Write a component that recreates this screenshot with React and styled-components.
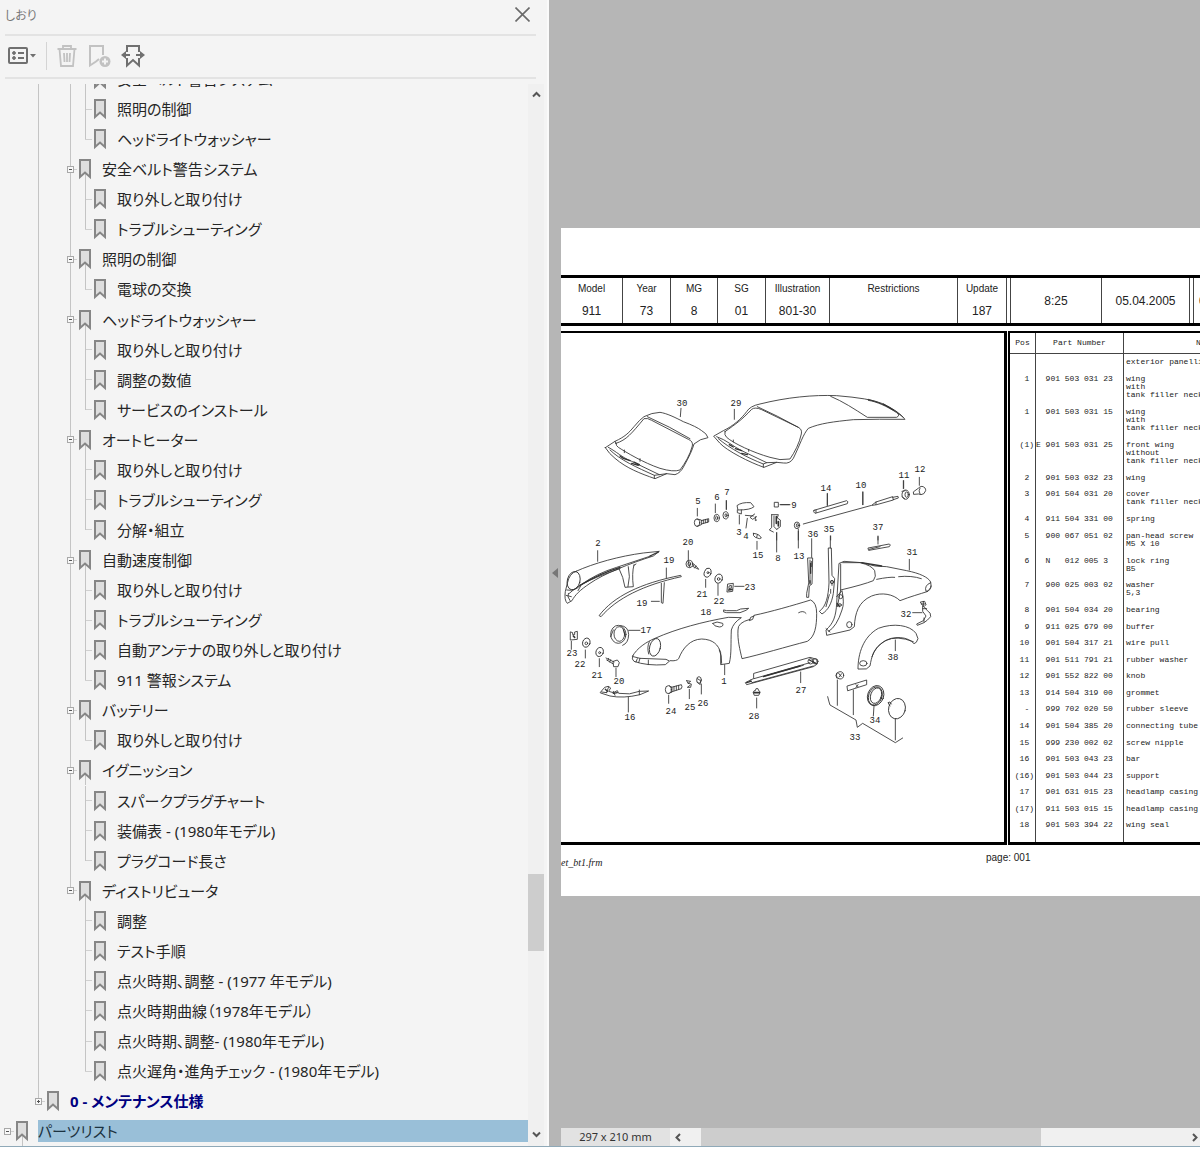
import styled, { createGlobalStyle, css } from "styled-components";

const GlobalStyle = createGlobalStyle`
  *, *::before, *::after { box-sizing: border-box; }
  body {
    margin: 0;
    background: #fff;
    font-family: "Noto Sans", "Noto Sans CJK JP", sans-serif;
    color: #222;
  }
  button {
    border: 0;
    padding: 0;
    margin: 0;
    background: none;
    font: inherit;
    color: inherit;
    cursor: pointer;
  }
`;

/* ---------- shell ---------- */

const Shell = styled.div`
  height: calc(100vh - 13px);
  display: grid;
  grid-template-columns: 549px minmax(0, 1fr);
  border-bottom: 1px solid #8fa9b8;
  overflow: hidden;
`;

const Sidebar = styled.aside`
  display: flex;
  flex-direction: column;
  min-height: 0;
  background: #f4f4f4;
  border-right: 2px solid #fafafa;
`;

const PanelHeader = styled.header`
  display: flex;
  align-items: center;
  justify-content: space-between;
  height: 36px;
  margin: 0 11px 0 5px;
  padding-bottom: 5px;
  border-bottom: 2px solid #e3e3e3;
`;

const PanelTitle = styled.h1`
  margin: 0;
  font-size: 12px;
  font-weight: 400;
  font-feature-settings: "palt";
  color: #777;
`;

const CloseButton = styled.button`
  width: 28px;
  height: 24px;
  svg { display: block; margin: auto; }
`;

const Toolbar = styled.div`
  display: flex;
  align-items: center;
  gap: 9px;
  height: 43px;
  margin: 0 11px 0 5px;
  padding-bottom: 2px;
  border-bottom: 2px solid #e3e3e3;
`;

const ToolButton = styled.button`
  height: 26px;
  color: ${(p) => (p.disabled ? "#c2c2c2" : "#707070")};
  svg { display: block; }
`;

const Separator = styled.span`
  width: 1px;
  height: 28px;
  background: #d4d4d4;
`;

const TreeArea = styled.div`
  flex: 1;
  min-height: 0;
  display: flex;
  margin-top: 5px;
  padding-right: 3px;
`;

/* ---------- bookmark tree ---------- */

const TreeView = styled.nav`
  flex: 1;
  min-width: 0;
  overflow: hidden;
`;

const TreeList = styled.ul`
  display: flex;
  flex-direction: column;
  height: calc(100% + 20px);
  margin: -20px 0 0;
  padding: 0;
  list-style: none;
`;

const TreeRow = styled.li`
  flex: 1 0 30px;
  display: flex;
  align-items: center;
  padding-left: ${(p) => (p.$level > 0 ? 31 : 0)}px;
`;

const Guide = styled.span`
  align-self: stretch;
  display: flex;
  align-items: center;
  justify-content: center;
  flex: 0 0 14px;
  margin-right: ${(p) => (p.$wide ? 18 : 1)}px;
  background-repeat: no-repeat;
  background-image: ${(p) => (p.$line ? "linear-gradient(#c4c4c4, #c4c4c4)" : "none")},
    ${(p) => (p.$tick ? "linear-gradient(#d0d0d0, #d0d0d0)" : "none")};
  background-position: 7px 0, 7px 50%;
  background-size: 1px ${(p) => (p.$line === "half" ? "50%" : "100%")}, 9px 1px;
`;

const Toggle = styled.button`
  position: relative;
  width: 7px;
  height: 7px;
  border: 1px solid #a8a8a8;
  background: #f8f8f8;
  &::before {
    content: "";
    position: absolute;
    inset: 2px 1px;
    background: #555;
  }
  ${(p) =>
    !p.$open &&
    css`
      &::after {
        content: "";
        position: absolute;
        inset: 1px 2px;
        background: #555;
      }
    `}
`;

const MarkIcon = styled.svg`
  flex: none;
  margin: 0 11px 0 1px;
`;

const TreeLink = styled.a`
  font-size: 15px;
  line-height: 22px;
  font-feature-settings: "palt";
  white-space: nowrap;
  text-decoration: none;
  color: #262626;
  ${(p) =>
    p.$bold &&
    css`
      font-weight: 700;
      color: #000080;
    `}
  ${(p) =>
    p.$selected &&
    css`
      flex: 1;
      margin-left: -1px;
      background: #99bfd8;
      color: #1c3240;
    `}
`;

const bookmarks = [
  [3, "安全ベルト警告システム"],
  [3, "照明の制御"],
  [3, "ヘッドライトウォッシャー"],
  [2, "安全ベルト警告システム"],
  [3, "取り外しと取り付け"],
  [3, "トラブルシューティング"],
  [2, "照明の制御"],
  [3, "電球の交換"],
  [2, "ヘッドライトウォッシャー"],
  [3, "取り外しと取り付け"],
  [3, "調整の数値"],
  [3, "サービスのインストール"],
  [2, "オートヒーター"],
  [3, "取り外しと取り付け"],
  [3, "トラブルシューティング"],
  [3, "分解・組立"],
  [2, "自動速度制御"],
  [3, "取り外しと取り付け"],
  [3, "トラブルシューティング"],
  [3, "自動アンテナの取り外しと取り付け"],
  [3, "911 警報システム"],
  [2, "バッテリー"],
  [3, "取り外しと取り付け"],
  [2, "イグニッション"],
  [3, "スパークプラグチャート"],
  [3, "装備表 - (1980年モデル)"],
  [3, "プラグコード長さ"],
  [2, "ディストリビュータ"],
  [3, "調整"],
  [3, "テスト手順"],
  [3, "点火時期、調整 - (1977 年モデル)"],
  [3, "点火時期曲線（1978年モデル）"],
  [3, "点火時期、調整- (1980年モデル)"],
  [3, "点火遅角・進角チェック - (1980年モデル)"],
  [1, "0 - メンテナンス仕様"],
  [0, "パーツリスト"],
];

// true when a later row still hangs on the guide line of this level
function continues(index, level) {
  for (let i = index + 1; i < bookmarks.length; i++) {
    if (bookmarks[i][0] === level) return true;
    if (bookmarks[i][0] < level) return false;
  }
  return false;
}

function Bookmark({ index }) {
  const [level, text] = bookmarks[index];
  const line = (l) => (continues(index, l) ? "full" : l === level && l > 0 ? "half" : null);
  const hasChildren = level < 3;
  const open = level !== 1;
  const toggle = <Toggle type="button" $open={open} aria-label={open ? "閉じる" : "開く"} />;

  return (
    <TreeRow $level={level}>
      {level === 0 && <Guide $tick>{toggle}</Guide>}
      {level >= 1 && (
        <Guide $line={line(1)} $tick={level === 1} $wide={level > 1}>
          {level === 1 && toggle}
        </Guide>
      )}
      {level >= 2 && (
        <Guide $line={line(2)} $tick={level === 2}>
          {level === 2 && toggle}
        </Guide>
      )}
      {level === 3 && <Guide $line={line(3)} $tick />}
      <MarkIcon width="12" height="30" viewBox="0 0 12 30">
        {hasChildren && open && <path d="M6.5 20V30" stroke="#c4c4c4" />}
        <path d="M1 6H11V23L6 18.5L1 23Z" fill="#dedede" stroke="#868686" strokeWidth="2" />
      </MarkIcon>
      <TreeLink href="#" $bold={level === 1} $selected={level === 0}>
        {text}
      </TreeLink>
    </TreeRow>
  );
}

/* ---------- scrollbars ---------- */

const Scrollbar = styled.div`
  display: flex;
  flex-direction: ${(p) => (p.$horizontal ? "row" : "column")};
  flex: ${(p) => (p.$horizontal ? "1" : "0 0 16px")};
  background: #f0f0f0;
`;

const ScrollButton = styled.button`
  flex: 0 0 ${(p) => p.$size}px;
  display: flex;
  align-items: center;
  justify-content: center;
`;

const Track = styled.span`
  flex: ${(p) => p.$part} 0 0;
`;

const Thumb = styled.span`
  flex: ${(p) => p.$part} 0 0;
  background: #cdcdcd;
`;

function Chevron({ d }) {
  return (
    <svg width="9" height="9" viewBox="0 0 9 9" fill="none" stroke="#555" strokeWidth="2">
      <path d={d} />
    </svg>
  );
}

/* ---------- document view ---------- */

const Viewer = styled.main`
  display: grid;
  grid-template-columns: 12px minmax(0, 1fr);
  min-height: 0;
  background: #b6b6b6;
`;

const CollapseButton = styled.button`
  display: flex;
  align-items: center;
  justify-content: center;
`;

const Stage = styled.div`
  display: flex;
  flex-direction: column;
  min-height: 0;
`;

const Canvas = styled.div`
  flex: 1;
  min-height: 0;
  overflow: hidden;
  padding-top: 228px;
`;

const Sheet = styled.article`
  width: 945px;
  padding: 47px 0 27px;
  background: #fff;
  font-family: "Liberation Sans", Arial, sans-serif;
  color: #222;
`;

const HeadTable = styled.table`
  width: 100%;
  table-layout: fixed;
  border-collapse: separate;
  border-spacing: 0;
  border-top: 3px solid #000;
  border-bottom: 3px solid #000;
  th, td {
    padding: 0;
    text-align: center;
    border-right: 1px solid #444;
  }
  th {
    height: 21px;
    font-size: 10px;
    font-weight: 400;
  }
  td {
    height: 24px;
    font-size: 12px;
  }
  .last { border: 0; text-align: left; padding-left: 5px; }
`;

const Panels = styled.div`
  display: grid;
  grid-template-columns: 446px 1fr;
  column-gap: 1px;
  margin-top: 5px;
`;

const Frame = styled.section`
  min-width: 0;
  height: 514px;
  overflow: hidden;
  border: solid #000;
  border-width: ${(p) => (p.$left ? "2px 3px 3px 0" : "2px 0 3px 2px")};
  svg { display: block; }
`;

const PartsTable = styled.table`
  width: 100%;
  height: 100%;
  table-layout: fixed;
  border-collapse: separate;
  border-spacing: 0;
  font: 8px/8px "Liberation Mono", monospace;
  white-space: pre;
  color: #222;
  th {
    height: 21px;
    padding: 0;
    font-weight: 400;
    border-bottom: 1px solid #444;
  }
  td {
    padding: 0 0 8px;
    vertical-align: top;
  }
  td:last-child { padding-left: 2px; }
  th + th, td + td { border-left: 1px solid #444; }
  .pos { text-align: right; padding-right: 1px; }
  .name { text-align: left; padding-left: 72px; }
`;

const Spacer = styled.tr`
  height: ${(p) => p.$size}px;
  && td { padding: 0; }
`;

const SheetFooter = styled.footer`
  display: grid;
  grid-template-columns: 425px 1fr;
  padding-top: 7px;
  font-size: 10px;
  line-height: 12px;
`;

const FileName = styled.span`
  padding-top: 5px;
  font-family: "Liberation Serif", "Times New Roman", serif;
  font-style: italic;
`;

const StatusBar = styled.footer`
  display: flex;
  height: 18px;
`;

const PageSize = styled.span`
  flex: 0 0 109px;
  background: #e2e2e2;
  font-size: 11px;
  line-height: 17px;
  text-align: center;
  color: #333;
`;

const parts = [
  ["", "", "exterior panelling"],
  ["  1 ", "  901 503 031 23", "wing\nwith\ntank filler neck"],
  ["  1 ", "  901 503 031 15", "wing\nwith\ntank filler neck"],
  [" (1)", "E 901 503 031 25", "front wing\nwithout\ntank filler neck"],
  ["  2 ", "  901 503 032 23", "wing"],
  ["  3 ", "  901 504 031 20", "cover\ntank filler neck"],
  ["  4 ", "  911 504 331 00", "spring"],
  ["  5 ", "  900 067 051 02", "pan-head screw\nM5 X 10"],
  ["  6 ", "  N   012 005 3 ", "lock ring\nB5"],
  ["  7 ", "  900 025 003 02", "washer\n5,3"],
  ["  8 ", "  901 504 034 20", "bearing"],
  ["  9 ", "  911 025 679 00", "buffer"],
  [" 10 ", "  901 504 317 21", "wire pull"],
  [" 11 ", "  901 511 791 21", "rubber washer"],
  [" 12 ", "  901 552 822 00", "knob"],
  [" 13 ", "  914 504 319 00", "grommet"],
  ["  - ", "  999 702 020 50", "rubber sleeve"],
  [" 14 ", "  901 504 385 20", "connecting tube"],
  [" 15 ", "  999 230 002 02", "screw nipple"],
  [" 16 ", "  901 503 043 23", "bar"],
  ["(16)", "  901 503 044 23", "support"],
  [" 17 ", "  901 631 015 23", "headlamp casing"],
  ["(17)", "  911 503 015 15", "headlamp casing"],
  [" 18 ", "  901 503 394 22", "wing seal"],
];

/* ---------- exploded drawing ---------- */

const callouts = [
  [30, 682, 403], [29, 736, 403], [5, 698, 501], [6, 717, 497], [7, 727, 492],
  [3, 739, 532], [4, 746, 536], [9, 794, 505], [8, 778, 558], [13, 799, 556],
  [15, 758, 555], [14, 826, 488], [10, 861, 485], [11, 904, 475], [12, 920, 469],
  [36, 813, 534], [35, 829, 529], [37, 878, 527], [31, 912, 552], [2, 598, 543],
  [20, 688, 542], [19, 669, 560], [19, 642, 603], [21, 702, 594], [22, 719, 601],
  [23, 750, 587], [18, 706, 612], [17, 646, 630], [23, 572, 653], [22, 580, 664],
  [21, 597, 675], [20, 619, 681], [16, 630, 717], [1, 724, 681], [24, 671, 711],
  [25, 690, 707], [26, 703, 703], [27, 801, 690], [28, 754, 716], [32, 906, 614],
  [38, 893, 657], [34, 875, 720], [33, 855, 737],
];

const Callout = styled.text`
  font: 9px "Liberation Mono", monospace;
  text-anchor: middle;
  fill: #222;
`;

function Drawing() {
  return (
    <svg width="443" height="510" viewBox="561 333 443 510" role="img" aria-label="801-30">
      <g fill="none" stroke="#333" strokeWidth="2.6" strokeLinejoin="round" strokeLinecap="round">
        {/* roofs, fuel flap and wire pull */}
        <g transform="translate(560 380) scale(.33333)">
          <path d="M136 203L165 184C195 170 205 160 222 140Q240 118 252 110Q275 98 300 97C320 100 345 112 370 125Q410 140 425 152Q440 160 444 173Q420 176 402 192Q396 215 372 258Q362 279 345 284L320 281L285 296C240 280 200 265 165 235Q148 222 136 203Z" />
          <path d="M168 190C200 180 215 160 252 116Q262 113 275 121L385 178Q400 184 397 198C390 225 375 250 360 270Q340 277 300 265C250 248 200 218 175 202Q168 198 168 190Z" />
          <path d="M145 202C170 215 185 232 215 244L298 284L283 286V295M150 210C180 240 230 262 283 286M165 184L168 190M298 284L320 281M262 110Q330 140 390 176M193 218V210M240 244V236" />
          <path d="M180 228L190 235M192 236L210 242M215 250L235 256M222 246L238 254" strokeWidth="4" />
          <path d="M462 168L490 152C520 138 545 115 560 95Q570 78 600 72C680 52 760 44 830 47Q930 55 965 70Q1015 92 1035 118Q960 117 880 119C820 125 780 130 745 145C728 165 722 190 700 235Q690 252 670 249L650 247L612 262C570 248 500 212 480 190Z" />
          <path d="M495 155C530 130 545 120 575 88Q585 80 605 89L715 142Q727 148 724 162C718 190 705 215 690 237Q660 243 630 232C580 218 520 190 500 172Q492 165 495 155Z" />
          <path d="M470 170C500 180 520 200 545 212L620 248L610 252V262M475 176C510 206 560 232 610 252M620 248L650 247M592 80Q650 106 715 142M520 186V180M566 214V208" />
          <path d="M508 194L520 201M526 206L545 212M545 220L562 224" strokeWidth="4" />
          <path d="M812 49C850 65 880 85 922 112H1010Q1022 106 1010 98C980 78 950 65 925 61M925 58Q990 75 1030 112" />
          <path d="M970 72L1000 90" strokeWidth="4" />
          <path d="M363 85L361 110M523 88V118M412 385V408M466 372V398M499 362V388M538 405V432M562 415L558 444M662 374H690M650 458V480M715 454V480M802 340V376M908 336V374M1031 302V325M812 468V480M954 468V480" />
          <path d="M532 376Q545 366 572 368L582 380Q572 390 535 390ZM532 390V398L544 402V390M556 406L580 408M584 402L570 412L578 418L590 410M586 410V422L590 420" />
          <ellipse cx="411" cy="428" rx="8" ry="11" />
          <path d="M411 417L424 420V434L411 439M424 422L446 416V426L424 432M430 420V430M436 418V428M442 418V427" />
          <ellipse cx="470" cy="414" rx="8" ry="11" />
          <ellipse cx="470" cy="414" rx="3" ry="6" />
          <ellipse cx="497" cy="406" rx="8" ry="11" />
          <ellipse cx="498" cy="406" rx="3" ry="5" />
          <path d="M644 367H655V381H644Z" />
          <path d="M635 404H655L652 414L661 420V440L650 448M635 404V442L628 450L640 456M642 408V440L650 448" />
          <path d="M649 410V430M655 425V438" strokeWidth="5" />
          <ellipse cx="711" cy="436" rx="8" ry="10" />
          <ellipse cx="712" cy="436" rx="3" ry="5" />
          <path d="M730 432L840 402L935 376L948 366L998 350L1000 360L950 374L937 376M998 352L1014 349L1015 354L1000 359M948 366V374M762 391L860 362Q866 364 862 371L765 400Q758 396 762 391ZM768 390V398" />
          <path d="M580 460L590 462L598 466L604 474L598 476L586 472Q578 468 580 460M592 464L590 472" />
        </g>

        {/* left wing, bonnet seal, front wing, bumper bar */}
        <g transform="translate(560 530) scale(.33333)">
          <path d="M48 124C100 100 180 78 250 69L298 64L280 78C210 100 130 132 90 160C60 180 45 195 36 212L22 220Q12 210 16 184L22 160Q28 130 48 124Z" />
          <ellipse cx="41" cy="152" rx="19" ry="28" transform="rotate(15 41 152)" />
          <path d="M20 180Q45 185 62 165Q110 130 170 112L272 78M28 190C60 160 110 140 180 116M25 190Q20 200 30 212M18 196L34 200M178 118Q190 140 195 172L220 170Q215 130 222 104M205 110Q212 140 204 170M222 106L228 102M62 168L54 182" />
          <path d="M60 166Q120 130 180 112M270 78L295 66" strokeWidth="4" />
          <path d="M118 256C160 200 240 160 362 136L364 140C250 165 170 205 124 259ZM304 160V218L309 220L313 158" />
          <path d="M113 62V94M319 114V144M274 214H298M385 62V90M437 148V172M474 162V196M524 169H552M206 301H240M34 334V358M76 360V384M118 386V410M168 414V440M205 502V546M326 496V520M388 478V506M424 462V492M494 404V434" />
          <ellipse cx="388" cy="102" rx="10" ry="11" />
          <path d="M384 92L390 112M396 98L412 112L416 118L400 110M402 104L398 110M408 108L404 114" />
          <ellipse cx="388" cy="102" rx="4" ry="6" />
          <ellipse cx="443" cy="128" rx="10" ry="14" transform="rotate(20 443 128)" />
          <circle cx="444" cy="128" r="3" />
          <ellipse cx="476" cy="146" rx="11" ry="14" transform="rotate(20 476 146)" />
          <circle cx="476" cy="147" r="4" />
          <path d="M504 162L520 160L518 184L502 186ZM508 168L514 166V174L508 176Z" />
          <path d="M506 180L516 178" strokeWidth="5" />
          <path d="M492 240L500 242H530L542 237L566 235L558 241L540 248H500L492 246Z" />
          <path d="M32 306L38 308V314H44V306L52 304V328L32 330Z" />
          <path d="M40 318L44 322" strokeWidth="5" />
          <ellipse cx="79" cy="338" rx="11" ry="14" transform="rotate(20 79 338)" />
          <circle cx="79" cy="340" r="4" />
          <ellipse cx="119" cy="366" rx="11" ry="14" transform="rotate(20 119 366)" />
          <circle cx="119" cy="368" r="3" />
          <path d="M138 384L162 396M140 390L160 402M146 385L143 392M152 389L149 396M160 394L172 390L178 398L174 410H162Z" />
          <ellipse cx="175" cy="313" rx="23" ry="27" />
          <ellipse cx="178" cy="312" rx="16" ry="22" />
          <path d="M182 287Q205 288 206 314Q205 340 188 346M160 300L152 320M190 300L196 320" />
          <path d="M218 378C230 355 260 335 285 325C350 296 430 275 505 262L544 263Q520 278 514 300C512 340 515 370 508 400L482 404V368C475 345 460 328 425 327C390 328 368 355 356 386Q350 394 330 392L316 404Q260 408 222 394Q214 388 218 378Z" />
          <ellipse cx="285" cy="352" rx="16" ry="27" transform="rotate(15 285 352)" />
          <path d="M268 335Q260 350 266 372M220 380L240 385L318 388L326 392M232 386L228 396M240 385L236 398M265 390V404M478 360Q486 375 485 400M458 280Q470 272 488 280Q492 290 478 291Q462 290 458 280" />
          <path d="M122 486L134 472Q146 465 152 474L146 484L160 488L172 482L176 490Q210 496 238 484L266 483L240 494Q190 506 150 498L122 489ZM146 470L140 488M238 480V494M160 484L165 496M125 486L140 488" />
          <path d="M136 478L142 484M160 490L172 488" strokeWidth="4" />
          <ellipse cx="325" cy="479" rx="9" ry="12" />
          <path d="M334 472L364 464Q368 470 364 476L334 486M342 470V482M349 468V480M356 466V478M328 468L336 472V486L326 490" />
          <path d="M380 452L392 454L384 460L394 462L392 472H382L390 466M380 452L384 460" />
          <ellipse cx="417" cy="450" rx="7" ry="10" />
          <path d="M412 446L422 452L420 464L412 456" />
        </g>

        {/* door, pillars, rear quarter, sill and tank parts */}
        <g transform="translate(720 460) scale(.33333)">
          <path d="M208 134H180M19 122V148M322 102V136M429 96V134M550 62V86M598 52V76M170 218V276M235 208V264M111 244V268M275 236V292M331 228V264M474 230V252M568 298V330M578 458H606M526 540V572M242 636V668M110 714V744M352 660V736M400 690V764M462 738L460 768M526 776V840" />
          <ellipse cx="557" cy="104" rx="11" ry="14" />
          <ellipse cx="560" cy="104" rx="5" ry="8" />
          <path d="M546 94L556 92M546 110L554 116M581 95L596 84Q600 79 606 79Q618 82 617 92Q613 104 603 104L596 102L582 103Z" />
          <path d="M600 84Q594 92 600 102" />
          <path d="M445 264L508 252Q514 254 508 260L447 271ZM448 268L480 260" />
          <path d="M264 294H278L276 372L268 378L266 412H260V400L266 370ZM270 300V368M274 304V320" />
          <path d="M272 310V340M270 362V372" strokeWidth="4" />
          <path d="M326 264H334L336 346L344 356L340 400C335 430 325 450 306 462L298 454C318 440 325 410 327 370ZM336 362V376M332 388V400M328 404L318 440" />
          <circle cx="336" cy="366" r="5" />
          <path d="M358 310L372 304L425 308L465 318L500 320L560 332C600 340 625 352 632 366Q636 385 624 394C600 402 570 410 540 422C520 402 485 396 455 408C415 425 405 460 403 500L390 510L320 526L318 510C340 490 348 470 350 430ZM362 312L362 390L352 440M368 308H420Q455 316 464 332Q470 350 460 362Q430 374 362 390M470 358Q510 350 524 352M536 350Q575 346 604 356M632 368Q612 376 618 394Q630 392 634 378M350 410L366 392Q374 430 366 450Q350 500 326 514M318 506L330 516" />
          <path d="M425 308L485 318M352 430L358 440" strokeWidth="4" />
          <ellipse cx="388" cy="494" rx="8" ry="9" />
          <circle cx="362" cy="410" r="6" />
          <circle cx="360" cy="435" r="4" />
          <path d="M602 426L614 424L618 434L612 440L622 452Q634 458 632 470Q622 482 612 488L592 496L590 492L610 482L618 468L608 454V438ZM610 424V440M604 432H616M608 446H620M612 474V486" />
          <path d="M414 626C414 580 430 530 475 505C520 488 570 495 588 520L594 536Q590 550 582 551C565 530 520 525 490 546C460 565 455 590 450 618L440 626Z" />
          <path d="M456 590Q466 560 496 542Q530 525 580 545" />
          <ellipse cx="430" cy="610" rx="11" ry="8" />
          <path d="M90 478Q52 488 54 510C52 540 60 570 66 596C120 584 200 560 262 544C285 530 290 500 290 460Q290 428 272 420C220 436 150 456 102 466L98 478L88 482L92 472L102 468M236 458Q250 450 258 460" />
          <path d="M102 640L270 592L290 598L292 612L280 620L80 674L76 668L100 656ZM102 656L270 608M92 660L96 668L280 618M134 648L250 616" />
          <circle cx="272" cy="604" r="8" />
          <circle cx="286" cy="604" r="8" />
          <path d="M268 600L288 610M80 668L92 664M130 650L240 618" strokeWidth="4" />
          <path d="M100 696Q102 690 106 692L108 686H114L116 692Q120 692 120 698L116 706H104Z" />
          <path d="M102 698H118" strokeWidth="5" />
          <ellipse cx="360" cy="646" rx="11" ry="11" />
          <path d="M350 640Q345 646 350 654M356 640L364 650M365 641L357 651" />
          <path d="M382 678L440 660V674L384 692ZM408 674L414 680M414 674L408 682" />
          <ellipse cx="467" cy="707" rx="24" ry="31" transform="rotate(20 467 707)" />
          <ellipse cx="468" cy="707" rx="16" ry="24" transform="rotate(20 468 707)" />
          <ellipse cx="466" cy="708" rx="20" ry="28" transform="rotate(20 466 708)" />
          <ellipse cx="531" cy="746" rx="25" ry="31" transform="rotate(15 531 746)" />
          <path d="M510 738L504 728L510 726L514 732M323 710Q328 730 330 735L408 780L412 802L428 790L526 848L548 834" />
        </g>
      </g>
      {callouts.map(([n, x, y], i) => (
        <Callout key={i} x={x} y={y + 3}>
          {n}
        </Callout>
      ))}
    </svg>
  );
}

function SheetHead() {
  return (
    <HeadTable>
      <colgroup>
        {[62, 48, 47, 48, 64, 128, 49, 4, 91, 88, 4, 312].map((w, i) => (
          <col key={i} style={{ width: w }} />
        ))}
      </colgroup>
      <tbody>
        <tr>
          {["Model", "Year", "MG", "SG", "Illustration", "Restrictions", "Update"].map((t) => (
            <th key={t} scope="col">{t}</th>
          ))}
          <td rowSpan="2" />
          <td rowSpan="2">8:25</td>
          <td rowSpan="2">05.04.2005</td>
          <td rowSpan="2" />
          <td rowSpan="2" className="last">0</td>
        </tr>
        <tr>
          {["911", "73", "8", "01", "801-30", "", "187"].map((t, i) => (
            <td key={i}>{t}</td>
          ))}
        </tr>
      </tbody>
    </HeadTable>
  );
}

function PartsList() {
  return (
    <PartsTable>
      <colgroup>
        <col style={{ width: 25 }} />
        <col style={{ width: 88 }} />
        <col />
      </colgroup>
      <thead>
        <tr>
          <th scope="col">Pos</th>
          <th scope="col">Part Number</th>
          <th scope="col" className="name">Name</th>
        </tr>
      </thead>
      <tbody>
        <Spacer $size={4}><td /><td /><td /></Spacer>
        {parts.map(([pos, number, name], i) => (
          <tr key={i}>
            <td className="pos">{pos}</td>
            <td>{number}</td>
            <td>{name}</td>
          </tr>
        ))}
        <Spacer $size={4}><td /><td /><td /></Spacer>
      </tbody>
    </PartsTable>
  );
}

function App() {
  return (
    <>
      <GlobalStyle />
      <Shell>
        <Sidebar>
          <PanelHeader>
            <PanelTitle>しおり</PanelTitle>
            <CloseButton type="button" aria-label="閉じる">
              <svg width="15" height="15" viewBox="0 0 15 15" stroke="#6a6a6a" strokeWidth="1.6">
                <path d="M.5 .5L14.5 14.5M14.5 .5L.5 14.5" />
              </svg>
            </CloseButton>
          </PanelHeader>

          <Toolbar>
            <ToolButton type="button" aria-label="オプション">
              <svg width="32" height="24" viewBox="0 0 32 24" fill="none" stroke="currentColor">
                <rect x="4" y="4" width="18" height="15" rx="1" strokeWidth="2" />
                <path d="M13 9H19M13 14H19" strokeWidth="2" />
                <circle cx="9" cy="9" r="1.4" fill="currentColor" />
                <circle cx="9" cy="14" r="1.4" fill="currentColor" />
                <path d="M25 10H31L28 13.5Z" fill="currentColor" stroke="none" />
              </svg>
            </ToolButton>
            <Separator />
            <ToolButton type="button" disabled aria-label="削除">
              <svg width="22" height="24" viewBox="0 0 22 24" fill="none" stroke="currentColor" strokeWidth="1.8">
                <path d="M1.5 5H20.5M7 5V2H15V5M3.5 5L5 22H17L18.5 5M8 9L8.5 18M11 9V18M14 9L13.5 18" />
              </svg>
            </ToolButton>
            <ToolButton type="button" disabled aria-label="しおりを追加">
              <svg width="25" height="24" viewBox="0 0 25 24" fill="none" stroke="currentColor" strokeWidth="2">
                <path d="M12 15L9 17.5L3 21.5V2H16V11" />
                <circle cx="18" cy="17.5" r="5.5" fill="currentColor" stroke="none" />
                <path d="M18 14.5V20.5M15 17.5H21" stroke="#f4f4f4" />
              </svg>
            </ToolButton>
            <ToolButton type="button" aria-label="しおりを展開">
              <svg width="24" height="24" viewBox="0 0 24 24" fill="none" stroke="currentColor" strokeWidth="2">
                <path d="M6 8V2H18V8M6 14V21.5L12 16L18 21.5V14" />
                <path d="M9 11H3M15 11H21" />
                <path d="M5 7V15L0 11ZM19 7V15L24 11Z" fill="currentColor" stroke="none" />
              </svg>
            </ToolButton>
          </Toolbar>

          <TreeArea>
            <TreeView aria-label="しおり">
              <TreeList>
                {bookmarks.map((b, i) => (
                  <Bookmark key={i} index={i} />
                ))}
              </TreeList>
            </TreeView>
            <Scrollbar>
              <ScrollButton $size={20} type="button" aria-label="上へ">
                <Chevron d="M1 6.5L4.5 3L8 6.5" />
              </ScrollButton>
              <Track $part={770} />
              <Thumb $part={77} />
              <Track $part={171} />
              <ScrollButton $size={24} type="button" aria-label="下へ">
                <Chevron d="M1 2.5L4.5 6L8 2.5" />
              </ScrollButton>
            </Scrollbar>
          </TreeArea>
        </Sidebar>

        <Viewer>
          <CollapseButton type="button" aria-label="パネルを隠す">
            <svg width="6" height="10" viewBox="0 0 6 10" fill="#777">
              <path d="M6 0V10L0 5Z" />
            </svg>
          </CollapseButton>
          <Stage>
            <Canvas>
              <Sheet>
                <SheetHead />
                <Panels>
                  <Frame $left>
                    <Drawing />
                  </Frame>
                  <Frame>
                    <PartsList />
                  </Frame>
                </Panels>
                <SheetFooter>
                  <FileName>et_bt1.frm</FileName>
                  <span>page: 001</span>
                </SheetFooter>
              </Sheet>
            </Canvas>
            <StatusBar>
              <PageSize>297 x 210 mm</PageSize>
              <Scrollbar $horizontal>
                <ScrollButton $size={17} type="button" aria-label="左へ">
                  <Chevron d="M6 1L2.5 4.5L6 8" />
                </ScrollButton>
                <Track $part={14} />
                <Thumb $part={340} />
                <Track $part={147} />
                <ScrollButton $size={12} type="button" aria-label="右へ">
                  <Chevron d="M3 1L6.5 4.5L3 8" />
                </ScrollButton>
              </Scrollbar>
            </StatusBar>
          </Stage>
        </Viewer>
      </Shell>
    </>
  );
}

export default App;
